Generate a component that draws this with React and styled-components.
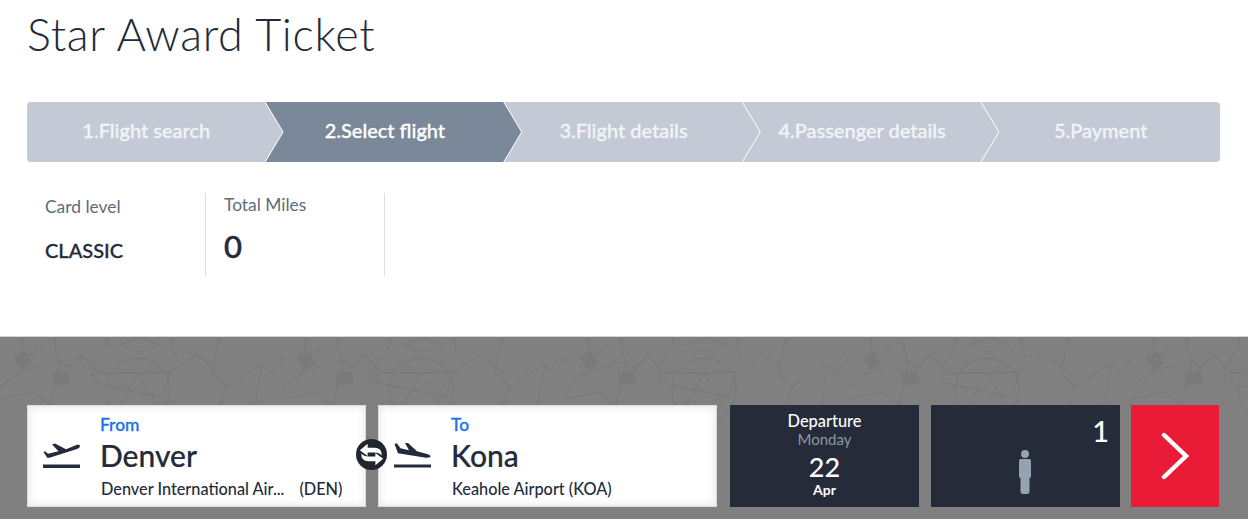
import React from 'react'
import styled, { createGlobalStyle } from 'styled-components'

const patternTile = `<svg xmlns='http://www.w3.org/2000/svg' width='283' height='182' viewBox='0 0 283 182'><g fill='none' stroke='#797979' stroke-width='1.3'><path d='M22 1L23 23L43 8M55 0Q54 15 60 23L68 31L82 18L93 30L107 8L107 0'/><path d='M120 8L140 0L160 8L140 15ZM172 0Q170 12 177 20M170 35L197 18L220 35M220 0L212 35L226 50L260 28L272 36L283 20'/><path d='M0 50L20 35L60 23M60 23L50 68M93 30L100 36L135 36L170 35L162 60L115 50L93 45Z'/><circle cx='138' cy='53' r='32'/><path d='M138 36L120 68M138 36L157 68M0 62L33 55L50 68M226 50L220 68M255 68L262 28'/></g><path fill='#7a7a7a' d='M13 20L25 14L33 27L21 33ZM52 36L68 34L71 46L54 49Z'/></svg>`

const GlobalStyle = createGlobalStyle`
    html, body {
        margin : 0;
        padding : 0;
        height : 519px;
        overflow : hidden;
        background : #fff;
        font-family : "Lato", "Open Sans", sans-serif;
        color : #232b3a;
    }
`

const Page = styled.div`
    display : flex;
    flex-direction : column;
    height : 519px;
`

const Top = styled.div`
    height : 336px;
    padding : 0 28px 0 27px;
    box-sizing : border-box;
`

const Title = styled.h1`
    margin : 0;
    padding-top : 7px;
    height : 102px;
    box-sizing : border-box;
    font-size : 45px;
    line-height : 54px;
    font-weight : 300;
    letter-spacing : 0.7px;
    color : #232b3a;
`

const Stepper = styled.div`
    display : grid;
    grid-template-columns : repeat(5, 1fr);
    height : 60px;
`

const Step = styled.div`
    display : flex;
    align-items : center;
    justify-content : center;
    padding-bottom : 4px;
    box-sizing : border-box;
    font-size : 20px;
    font-weight : 500;
    -webkit-text-stroke : 0.3px currentColor;
    color : ${props => props.$active ? '#fff' : '#f2f4f7'};
    background : ${props => props.$active ? '#7b8899' : '#c3cad5'};
    position : relative;
    z-index : ${props => 5 - props.$index};
    margin-right : ${props => props.$last ? '0' : '-18px'};
    padding-right : ${props => props.$last ? '0' : '18px'};
    border-radius : ${props => props.$first ? '4px 0 0 4px' : props.$last ? '0 4px 4px 0' : '0'};
    clip-path : polygon(
        ${props => props.$first ? '0 0' : '0 0, 18px 50%, 0 100%'}${props => props.$first ? ', 0 100%' : ''},
        ${props => props.$last ? '100% 100%, 100% 0' : 'calc(100% - 19px) 100%, calc(100% - 1px) 50%, calc(100% - 19px) 0'}
    );
`

const Stats = styled.div`
    display : flex;
    margin-top : 31px;
`

const Stat = styled.div`
    width : ${props => props.$width}px;
    height : 83px;
    box-sizing : border-box;
    padding-left : 18px;
    border-right : 1px solid #dcdfe3;
`

const StatLabel = styled.div`
    font-size : 17.4px;
    line-height : 20px;
    color : #5f6b7a;
    padding-top : ${props => props.$offset}px;
`

const CardLevel = styled.div`
    margin-top : 21px;
    font-size : 20px;
    line-height : 24px;
    font-weight : 500;
    -webkit-text-stroke : 0.3px currentColor;
    color : #232b3a;
`

const Miles = styled.div`
    margin-top : 14px;
    font-size : 31px;
    line-height : 34px;
    font-weight : 500;
    -webkit-text-stroke : 0.5px currentColor;
    color : #232b3a;
`

const Band = styled.section`
    flex : 1;
    border-top : 1px solid #d4d4d4;
    background-color : #808080;
    background-image : url("data:image/svg+xml,${encodeURIComponent(patternTile)}");
    padding : 68px 29px 12px 27px;
    display : flex;
    align-items : stretch;
`

const Place = styled.div`
    width : 339px;
    height : 102px;
    box-sizing : border-box;
    margin-right : 12px;
    padding-left : 15px;
    display : flex;
    align-items : center;
    position : relative;
    background : #fff;
    border : 1px solid #dcdcdc;
    box-shadow : inset 0 0 8px rgba(0, 0, 0, 0.12);
`

const PlaceIcon = styled.svg`
    width : 37px;
    height : 26px;
    flex : none;
    margin-top : -1px;
    fill : #232b3a;
`

const PlaceText = styled.div`
    margin-left : 21px;
    padding-top : 2px;
    flex : 1;
`

const PlaceLabel = styled.div`
    margin-left : -1px;
    font-size : 17.4px;
    line-height : 19px;
    font-weight : 500;
    -webkit-text-stroke : 0.3px currentColor;
    color : #1a73e8;
`

const City = styled.div`
    margin-top : 3px;
    margin-left : -1px;
    font-size : 30px;
    line-height : 36px;
    font-weight : 500;
    -webkit-text-stroke : 0.2px currentColor;
    color : #232b3a;
`

const Airport = styled.div`
    margin-top : 6px;
    display : flex;
    gap : 15px;
    font-size : 16.3px;
    line-height : 20px;
    font-weight : 500;
    color : #232b3a;
`

const Swap = styled.svg`
    position : absolute;
    right : -22px;
    top : 33px;
    width : 31px;
    height : 31px;
    z-index : 2;
`

const DarkCard = styled.div`
    width : 189px;
    height : 102px;
    box-sizing : border-box;
    margin-left : ${props => props.$shift}px;
    margin-right : 12px;
    background : #252b39;
    color : #fff;
`

const DateCard = styled(DarkCard)`
    display : flex;
    flex-direction : column;
    align-items : center;
    padding-top : 7px;
`

const DateLabel = styled.div`
    font-size : 16.4px;
    line-height : 18px;
    font-weight : 500;
`

const DateDay = styled.div`
    font-size : 15px;
    line-height : 19px;
    color : #8a97a6;
`

const DateNumber = styled.div`
    margin-top : 2px;
    font-size : 27px;
    line-height : 32px;
    font-weight : 500;
`

const DateMonth = styled.div`
    margin-top : -1px;
    font-size : 14px;
    line-height : 16px;
    font-weight : 700;
`

const PaxCard = styled(DarkCard)`
    display : grid;
    grid-template-rows : 50px 1fr;
    justify-items : center;
`

const PaxCount = styled.div`
    justify-self : end;
    padding : 9px 11px 0 0;
    font-size : 29px;
    line-height : 33px;
    font-weight : 500;
`

const PaxIcon = styled.svg`
    width : 14px;
    height : 44px;
    margin-top : -5px;
    margin-right : 1px;
    fill : #95a3b1;
`

const Go = styled.button`
    width : 88px;
    height : 102px;
    margin-left : -1px;
    padding : 0;
    border : 0;
    background : #ea1b37;
    display : flex;
    align-items : center;
    justify-content : center;
`

const steps = ['1.Flight search', '2.Select flight', '3.Flight details', '4.Passenger details', '5.Payment']

export default function App(){
    return(
        <Page>
            <GlobalStyle/>
            <Top>
                <Title>Star Award Ticket</Title>
                <Stepper>
                    {steps.map((step, i) => (
                        <Step key={step} $index={i} $active={i === 1} $first={i === 0} $last={i === 4}>{step}</Step>
                    ))}
                </Stepper>
                <Stats>
                    <Stat $width={179}>
                        <StatLabel $offset={4}>Card level</StatLabel>
                        <CardLevel>CLASSIC</CardLevel>
                    </Stat>
                    <Stat $width={179}>
                        <StatLabel $offset={2}>Total Miles</StatLabel>
                        <Miles>0</Miles>
                    </Stat>
                </Stats>
            </Top>
            <Band>
                <Place>
                    <PlaceIcon viewBox="0 0 37 26">
                        <path d="M37 3Q37 1.2 34 1.8L23 6.3L12 .5L9 1.4L15.5 8.2L5 10.8L2 8.2L.5 9L4 14.5Q5 15.2 8 14.3L34 6Q37 4.8 37 3Z"/>
                        <rect x="0" y="21.5" width="37" height="3.5"/>
                    </PlaceIcon>
                    <PlaceText>
                        <PlaceLabel>From</PlaceLabel>
                        <City>Denver</City>
                        <Airport><span>Denver International Air...</span><span>(DEN)</span></Airport>
                    </PlaceText>
                    <Swap viewBox="0 0 32 32">
                        <circle cx="16" cy="16" r="16" fill="#20252f"/>
                        <path d="M12 5L4 11.5L12 17.5V14H19Q24 14 26.5 17Q27 9 19 9H12Z" fill="#fff"/>
                        <path d="M20 27L28 20.5L20 14.5V18H13Q8 18 5.5 15Q5 23 13 23H20Z" fill="#fff"/>
                    </Swap>
                </Place>
                <Place>
                    <PlaceIcon viewBox="0 0 37 26">
                        <path d="M.5 1L2.8 .3L6.5 5.2L15 7.2L11 0L14 0L23 8.2L34 11.2Q37.2 12.4 36.2 14.2L32 14.8L4 10.2Z"/>
                        <rect x="0" y="21.5" width="37" height="3"/>
                    </PlaceIcon>
                    <PlaceText>
                        <PlaceLabel>To</PlaceLabel>
                        <City>Kona</City>
                        <Airport><span>Keahole Airport (KOA)</span></Airport>
                    </PlaceText>
                </Place>
                <DateCard $shift={1}>
                    <DateLabel>Departure</DateLabel>
                    <DateDay>Monday</DateDay>
                    <DateNumber>22</DateNumber>
                    <DateMonth>Apr</DateMonth>
                </DateCard>
                <PaxCard $shift={0}>
                    <PaxCount>1</PaxCount>
                    <PaxIcon viewBox="0 0 14 44">
                        <circle cx="7" cy="4" r="4"/>
                        <path d="M3 9H11Q13 9 13 11V26Q13 28 11.5 28V41Q11.5 44 9 44H5Q2.5 44 2.5 41V28Q1 28 1 26V11Q1 9 3 9Z"/>
                    </PaxIcon>
                </PaxCard>
                <Go aria-label="Next">
                    <svg width="28" height="48" viewBox="0 0 28 48" fill="none" stroke="#fff" strokeWidth="4.4" strokeLinecap="round">
                        <path d="M3 3L25 24L3 45"/>
                    </svg>
                </Go>
            </Band>
        </Page>
    )
}
